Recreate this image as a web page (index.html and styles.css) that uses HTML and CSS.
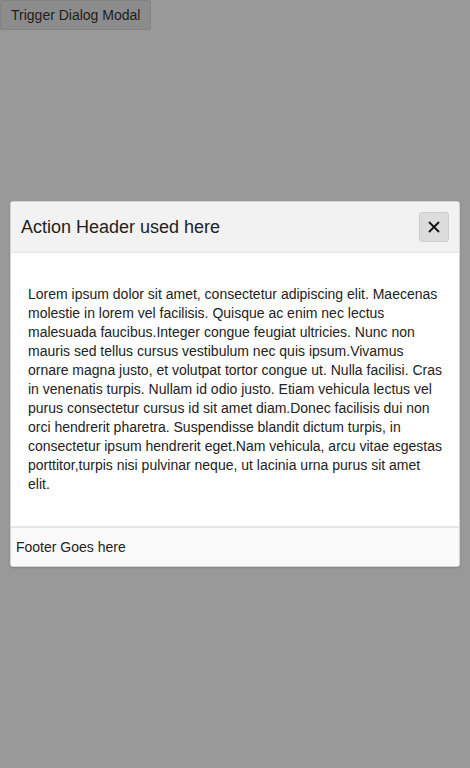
FILE: index.html
```html
<!DOCTYPE html>
<html>
<head>
<meta charset="utf-8">
<link rel="stylesheet" href="styles.css">
</head>
<body>
<button class="trigger">Trigger Dialog Modal</button>
<div class="dialog">
  <div class="dialog-header">
    <span class="dialog-title">Action Header used here</span>
    <button class="close" aria-label="Close">
      <svg width="14" height="14" viewBox="0 0 14 14"><path d="M2 2 L12 12 M12 2 L2 12" stroke="#111" stroke-width="1.8" fill="none"/></svg>
    </button>
  </div>
  <div class="dialog-body">
    <p>Lorem ipsum dolor sit amet, consectetur adipiscing elit. Maecenas molestie in lorem vel facilisis. Quisque ac enim nec lectus malesuada faucibus.Integer congue feugiat ultricies. Nunc non mauris sed tellus cursus vestibulum nec quis ipsum.Vivamus ornare magna justo, et volutpat tortor congue ut. Nulla facilisi. Cras in venenatis turpis. Nullam id odio justo. Etiam vehicula lectus vel purus consectetur cursus id sit amet diam.Donec facilisis dui non orci hendrerit pharetra. Suspendisse blandit dictum turpis, in consectetur ipsum hendrerit eget.Nam vehicula, arcu vitae egestas porttitor,turpis nisi pulvinar neque, ut lacinia urna purus sit amet elit.</p>
  </div>
  <div class="dialog-footer">Footer Goes here</div>
</div>
</body>
</html>
```
FILE: styles.css
```css
html, body {
  margin: 0;
  padding: 0;
  height: 100%;
}
body {
  background: #999999;
  font-family: "Liberation Sans", Arial, sans-serif;
  color: #222;
}
.trigger {
  display: block;
  margin: 0;
  height: 30px;
  padding: 0 10px;
  white-space: nowrap;
  background: #8c8c8c;
  border: 1px solid #828282;
  border-radius: 2px;
  font-family: "Liberation Sans", Arial, sans-serif;
  font-size: 14px;
  color: #1c1c1c;
}
.dialog {
  position: absolute;
  left: 10px;
  top: 201px;
  width: 450px;
  box-sizing: border-box;
  border: 1px solid #d4d4d4;
  border-radius: 3px;
  background: #fff;
  overflow: hidden;
  box-shadow: 0 1px 2px rgba(0,0,0,0.15);
}
.dialog-header {
  display: flex;
  align-items: center;
  justify-content: space-between;
  padding: 10px;
  background: #f2f2f2;
  border-bottom: 1px solid #e3e3e3;
}
.dialog-title {
  font-size: 18px;
  color: #222;
}
.close {
  width: 30px;
  height: 30px;
  padding: 0;
  display: flex;
  align-items: center;
  justify-content: center;
  background: #dcdcdc;
  border: 1px solid #cdcdcd;
  border-radius: 3px;
}
.dialog-body {
  padding: 32px 17px;
}
.dialog-body p {
  margin: 0;
  font-size: 14px;
  line-height: 19px;
  color: #222;
}
.dialog-footer {
  border-top: 2px solid #e6e6e6;
  background: #f9f9f9;
  height: 38px;
  padding: 0 5px;
  display: flex;
  align-items: center;
  font-size: 14px;
  color: #222;
}
```
